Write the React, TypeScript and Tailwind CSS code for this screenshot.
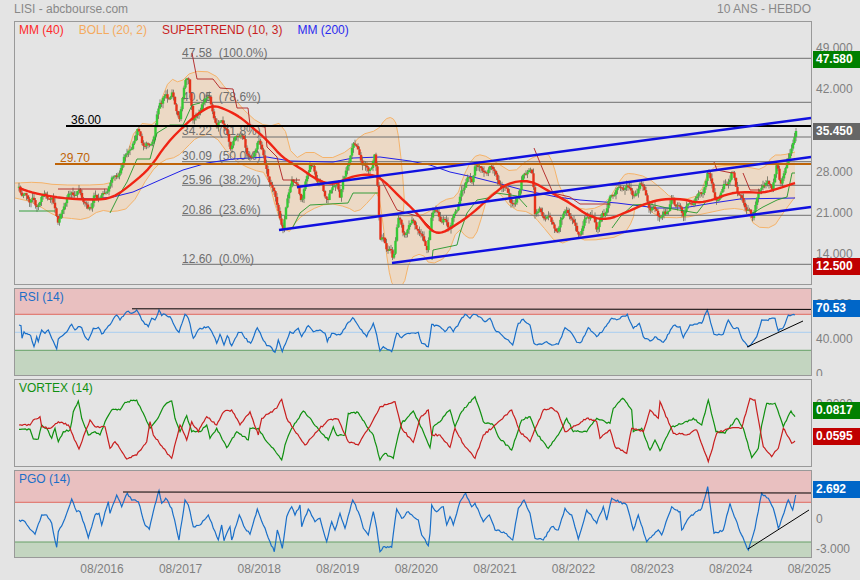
import React from "react";

type P = [number, number];

const parse = (s: string): P[] =>
  s.trim().split(";").filter(Boolean).map((p) => {
    const [a, b] = p.split(",").map(Number);
    return [a, b] as P;
  });
const fromZoom = (s: string, ox: number, oy: number): P[] =>
  parse(s).map(([a, b]) => [ox + a / 3, oy + b / 3] as P);
const pts = (a: P[]) => a.map(([x, y]) => `${x.toFixed(1)},${y.toFixed(1)}`).join(" ");
const rnd = (i: number) => {
  const v = Math.sin(i * 12.9898 + 4.1) * 43758.5453;
  return v - Math.floor(v);
};
const jitter = (a: P[], amp: number, seed: number): P[] => {
  const out: P[] = [];
  for (let i = 0; i < a.length - 1; i++) {
    const [x0, y0] = a[i];
    const [x1, y1] = a[i + 1];
    const n = Math.max(1, Math.round((x1 - x0) / 1.5));
    for (let k = 0; k < n; k++) {
      const t = k / n;
      const j = k === 0 ? 0 : (rnd(seed + i * 7 + k) - 0.5) * 2 * amp;
      out.push([x0 + (x1 - x0) * t, y0 + (y1 - y0) * t + j]);
    }
  }
  out.push(a[a.length - 1]);
  return out;
};
const chaikin = (a: P[], rounds = 2): P[] => {
  let cur = a;
  for (let r = 0; r < rounds; r++) {
    const out: P[] = [cur[0]];
    for (let i = 0; i < cur.length - 1; i++) {
      const [x0, y0] = cur[i];
      const [x1, y1] = cur[i + 1];
      out.push([x0 * 0.75 + x1 * 0.25, y0 * 0.75 + y1 * 0.25]);
      out.push([x0 * 0.25 + x1 * 0.75, y0 * 0.25 + y1 * 0.75]);
    }
    out.push(cur[cur.length - 1]);
    cur = out;
  }
  return cur;
};
const interp = (a: P[], x: number) => {
  for (let i = 0; i < a.length - 1; i++) {
    if (x <= a[i + 1][0]) {
      const t = (x - a[i][0]) / (a[i + 1][0] - a[i][0] || 1);
      return a[i][1] + (a[i + 1][1] - a[i][1]) * t;
    }
  }
  return a[a.length - 1][1];
};

const price = parse(
  "19,187;23,195;33,200;35,207;43,197;52,197;58,225;63,205;72,193;80,192;88,210;95,197;103,197;110,183;120,170;128,152;138,132;143,142;150,148;155,130;160,100;172,95;180,120;185,80;188,73;193,123;202,103;210,98;217,130;222,117;230,147;240,132;252,163;258,137;267,170;283,227;292,177;302,200;310,163;328,200;337,180;340,197;353,143;362,160;368,173;375,157;378,190;380,237;390,250;393,260;398,217;403,233;412,223;420,230;427,253;432,210;440,217;450,227;457,207;467,177;472,183;475,163;483,173;490,167;500,182;510,197;515,208;522,180;528,167;533,177;535,210;547,217;558,230;567,207;578,235;590,213;597,227;607,207;612,193;627,185;633,197;640,183;650,207;663,217;673,200;683,213;693,200;702,195;708,170;715,200;725,187;732,173;740,197;752,217;762,183;772,187;777,163;780,187;787,163;792,147;796,131"
);
const mm40 = chaikin(parse(
  "19,188;33,193;60,198;93,200;113,198;133,183;150,168;167,143;187,123;200,112;213,105;227,110;240,117;253,128;267,140;283,158;300,168;317,180;333,185;350,177;367,174;380,177;400,197;417,213;430,230;440,234;453,227;473,213;490,197;507,183;530,180;550,192;570,203;590,217;607,220;627,212;647,203;663,199;683,199;697,203;713,200;730,193;747,192;763,193;780,188;795,183"
));
const mm200 = parse(
  "19,188;33,193;60,198;93,199;113,197;133,192;160,180;183,170;207,163;233,159;267,157;290,161;333,162;353,158;380,157;410,161;430,165;450,172;473,177;497,183;523,190;557,197;580,200;617,203;657,208;683,208;713,203;740,199;795,198"
);
const bollUp = chaikin(parse(
  "15,183;37,182;57,185;100,185;113,182;123,167;137,123;157,125;160,103;170,78;180,83;192,71;213,72;227,90;250,117;267,127;283,122;293,160;310,150;327,160;350,150;360,135;378,130;385,119;392,117;397,125;402,167;405,210;398,216;420,216;432,210;443,200;457,197;463,177;473,157;482,154;497,163;513,173;527,160;547,152;553,163;560,190;573,207;590,210;607,203;623,175;630,173;647,177;663,190;670,197;683,200;700,195;710,167;730,165;747,167;763,170;773,155;783,155;795,152"
), 1);
const bollLow = chaikin(parse(
  "15,198;33,202;57,217;67,218;85,220;100,210;113,212;130,208;150,173;163,160;177,157;187,147;197,137;213,133;233,160;253,170;267,173;277,213;287,235;297,220;310,210;328,203;347,207;357,213;370,200;378,190;383,223;388,267;393,288;403,288;410,258;422,253;430,265;447,257;458,227;467,238;475,238;483,213;487,197;497,190;513,210;530,212;540,223;558,245;577,237;587,241;623,236;633,220;635,207;643,203;657,217;683,218;707,213;730,208;747,210;755,227;773,228;783,213;795,197"
), 1);
const greenTrend = [
  "19,211;55,211",
  "110,213;118,197;127,182;137,159;150,159;157,133;170,125;183,125;192,105;200,103",
  "293,227;300,213;310,205;348,203;353,193;378,193",
  "432,260;433,250;457,245;460,233;467,213;477,200;488,198;497,193;517,196;527,207",
  "612,228;620,217;633,205;650,204;667,208;697,213;707,200",
  "753,213;763,207;777,200;787,197;792,173;795,173",
].map(parse);
const redTrend = [
  "58,189;107,189",
  "192,53;197,79;213,79;220,88;233,89;237,108;248,108;250,125;265,127;267,147;277,157;283,180;300,180",
  "380,177;388,193;397,210;420,217;430,227",
  "534,148;543,170;553,193;570,197;580,204;610,204",
  "714,162;717,170;732,173",
  "743,173;750,190;760,190",
].map(parse);

const rsi = [
  ...fromZoom("57,120;63,122;66,160;72,140;85,148;92,152;102,185;110,155;115,170;125,135;135,145;145,135;155,160;170,192;175,162;195,145;215,118;225,135;235,125;245,128;255,155;265,165;280,130;295,127;305,147;320,130;335,112;350,90;360,105;380,80;395,85;410,75;425,105;445,125;455,100;465,105;477,75;485,92;495,88;510,95;525,125;537,142;555,88;565,100;580,160;600,130;625,125;640,150;650,175;660,148;672,180;682,152;695,182;715,142;725,142;735,160;752,175;772,128;785,155;800,182;815,188;825,202;835,165;847,200;870,140;880,145;895,130;905,155;925,122;940,140;960,135;975,145;982,170;995,145;1010,150;1025,145;1045,112;1058,98;1070,115;1085,135;1100,155;1120,115;1130,150;1140,198;1150,185;1175,200;1190,145;1205,158;1225,145;1255,142;1265,175;1285,185", 0, 285),
  ...fromZoom("0,155;5,118;30,125;45,140;60,125;70,140;105,88;120,100;130,88;145,95;165,110;180,100;195,135;220,155;235,165;248,180;265,115;280,103;300,120;312,175;335,178;350,170;370,180;385,178;405,128;425,145;440,172;455,170;475,128;500,155;520,135;545,100;565,103;592,88;610,130;628,115;640,155;660,168;675,155;700,172;730,122;750,125;760,158;780,120;815,115;832,75;852,148;880,147;895,105;910,130;925,130;935,160;955,185;980,155;995,105;1010,105;1035,100;1045,138;1060,128;1075,90;1085,90;1095,90", 430, 285),
];
const vxGreen = [
  ...fromZoom("57,433;90,433;100,462;115,462;125,420;140,430;155,460;165,430;175,470;190,440;210,435;220,380;235,348;245,400;265,450;285,440;300,450;315,410;335,375;360,375;375,352;410,345;430,385;450,430;470,405;495,360;515,348;525,400;540,440;560,392;575,440;600,440;620,420;630,460;650,430;680,488;710,440;745,465;750,430;775,430;800,470;820,490;845,525;855,480;875,430;910,378;925,395;950,425;985,465;1000,425;1010,450;1035,450;1045,385;1075,383;1105,430;1120,450;1140,525;1155,505;1180,520;1195,450;1205,415;1240,378;1270,440", 0, 285),
  ...fromZoom("0,488;10,425;30,410;40,395;60,375;75,425;95,380;135,335;160,410;190,420;205,455;245,495;275,405;300,395;320,445;355,490;385,450;410,400;430,440;470,440;500,400;540,415;550,370;578,340;605,375;610,440;635,430;660,495;675,465;690,497;725,425;760,415;790,400;815,420;835,345;858,440;885,445;920,400;940,430;965,518;985,490;995,420;1010,355;1035,355;1060,425;1083,378;1095,395", 430, 285),
];
const vxRed = [
  ...fromZoom("57,420;90,420;100,405;120,395;125,425;150,430;175,410;205,420;237,492;260,430;270,405;285,425;315,425;330,490;345,470;380,522;410,510;440,470;450,410;460,450;490,490;515,520;540,420;560,465;575,410;595,440;620,395;650,420;672,380;695,375;720,420;750,380;775,450;785,400;830,370;845,343;860,400;880,430;915,480;950,440;985,405;1015,403;1045,470;1075,480;1105,430;1140,365;1185,350;1205,430;1240,472;1260,400;1285,375", 0, 285),
  ...fromZoom("5,450;30,450;60,487;75,430;105,485;135,520;160,450;195,420;245,375;270,440;300,470;340,375;365,368;385,385;405,440;440,420;470,400;500,410;510,460;540,435;555,485;590,505;605,430;640,440;660,375;685,400;690,350;730,445;770,450;800,435;835,530;860,445;900,430;935,430;960,340;975,345;990,430;1000,485;1025,515;1045,490;1060,430;1085,475;1095,468", 430, 285),
];
const pgo = [
  ...fromZoom("57,705;75,710;85,725;105,748;125,690;140,690;155,715;170,787;175,740;195,700;215,642;230,680;240,680;265,758;285,690;297,685;305,720;325,650;330,685;350,630;365,665;382,625;395,645;415,650;435,720;448,733;460,680;477,617;485,655;497,640;515,670;537,765;555,645;565,660;580,725;600,720;625,690;640,730;655,765;665,720;672,767;690,725;695,765;718,690;735,730;750,748;772,672;790,720;810,770;823,800;832,735;847,790;860,695;875,665;885,690;900,660;905,725;925,672;945,710;960,700;980,770;995,710;1005,735;1020,685;1035,730;1058,645;1075,680;1090,730;1105,750;1120,680;1130,730;1140,800;1150,785;1175,787;1190,672;1205,700;1225,680;1240,695;1255,705;1265,750;1285,782", 0, 285),
  ...fromZoom("0,745;5,660;20,680;40,665;50,720;60,695;70,720;90,650;107,625;125,665;135,655;160,710;178,690;195,735;225,745;248,765;265,670;282,645;300,685;315,760;340,765;365,725;385,735;405,670;425,690;445,762;470,675;500,715;520,665;530,705;545,640;590,660;610,735;625,690;650,770;685,735;695,750;725,665;750,680;755,735;780,695;815,670;833,605;852,745;880,735;900,655;930,740;955,795;975,730;995,625;1015,640;1030,670;1045,730;1075,645;1088,675;1097,630", 430, 285),
];

const candles = (() => {
  const out: { x: number; o: number; c: number; hi: number; lo: number }[] = [];
  const noise = (i: number) => 3.2 * Math.sin(i * 0.95 + 2 * Math.sin(i * 0.13)) + (rnd(i) - 0.5) * 2.5;
  let prev = interp(price, 19);
  let i = 0;
  for (let x = 19; x <= 796; x += 1.5) {
    const c = interp(price, x) + (x > 780 ? 0 : noise(i));
    out.push({
      x,
      o: prev,
      c,
      hi: Math.min(prev, c) - rnd(i + 500) * 5,
      lo: Math.max(prev, c) + rnd(i + 900) * 5,
    });
    prev = c;
    i++;
  }
  return out;
})();

const fibs: [number, string][] = [
  [58.3, "47.58  (100.0%)"],
  [102.3, "40.05  (78.6%)"],
  [137, "34.22  (61.8%)"],
  [161.7, "30.09  (50.0%)"],
  [185.3, "25.96  (38.2%)"],
  [215.3, "20.86  (23.6%)"],
  [264.3, "12.60  (0.0%)"],
];

function Tick({ children }: { children?: React.ReactNode }) {
  return <div className="h-[14px] leading-[14px] text-[#808080] pl-[4px]">{children}</div>;
}
function Tag({ className, children }: { className: string; children: React.ReactNode }) {
  return (
    <div className={`absolute left-[1px] w-[47px] h-[17px] pl-[3px] leading-[17px] font-bold text-white ${className}`}>
      {children}
    </div>
  );
}

function MainChart() {
  const area = [...bollUp, ...[...bollLow].reverse()];
  return (
    <svg viewBox="15 22 796 262" className="w-[796px] h-[262px] block text-[12px]">
      <polygon points={pts(area)} fill="#ecd9c5" />
      <polyline points={pts(bollUp)} fill="none" stroke="#f5b36a" strokeWidth="1" />
      <polyline points={pts(bollLow)} fill="none" stroke="#f5b36a" strokeWidth="1" />
      {fibs.map(([y, t]) => (
        <g key={t}>
          <line x1="182" x2="811" y1={y} y2={y} stroke="#6e6e6e" strokeWidth="1" />
          <text x="182" y={y - 1.8} fill="#6e6e6e" style={{ whiteSpace: "pre" }}>
            {t}
          </text>
        </g>
      ))}
      <polyline points={pts(mm200)} fill="none" stroke="#2020e8" strokeWidth="1" />
      {candles.map((k) => (
        <g key={k.x}>
          <line x1={k.x} x2={k.x} y1={k.hi} y2={k.lo} stroke="#6a6a5a" strokeWidth="0.8" />
          <rect
            x={k.x - 1.2}
            y={Math.min(k.o, k.c)}
            width="2.4"
            height={Math.max(1, Math.abs(k.o - k.c))}
            fill={k.c < k.o ? "#36c936" : "#e5321a"}
          />
        </g>
      ))}
      {greenTrend.map((g, i) => (
        <polyline key={i} points={pts(g)} fill="none" stroke="#23962a" strokeWidth="0.9" />
      ))}
      {redTrend.map((g, i) => (
        <polyline key={i} points={pts(g)} fill="none" stroke="#b02020" strokeWidth="0.9" />
      ))}
      <polyline points={pts(mm40)} fill="none" stroke="#f02414" strokeWidth="2.4" strokeLinejoin="round" />
      <line x1="55" x2="811" y1="164" y2="164" stroke="#bf6408" strokeWidth="2" />
      <text x="60" y="162" fill="#bf6408">29.70</text>
      <line x1="66" x2="811" y1="126" y2="126" stroke="#000" strokeWidth="2" />
      <text x="71" y="124" fill="#000">36.00</text>
      <line x1="297" x2="811" y1="187" y2="118" stroke="#1010e0" strokeWidth="2.4" />
      <line x1="279" x2="811" y1="230" y2="157" stroke="#1010e0" strokeWidth="2.4" />
      <line x1="392" x2="811" y1="263" y2="207" stroke="#1010e0" strokeWidth="2.4" />
    </svg>
  );
}

function Rsi() {
  return (
    <svg viewBox="15 289 796 86" className="w-[796px] h-[86px] block">
      <rect x="15" y="289" width="796" height="25.3" fill="#e9c0c0" />
      <rect x="15" y="350.3" width="796" height="25" fill="#c3d5c0" />
      <line x1="15" x2="811" y1="314.3" y2="314.3" stroke="#e06a60" />
      <line x1="15" x2="811" y1="332.3" y2="332.3" stroke="#a8cdf0" />
      <line x1="15" x2="811" y1="350.3" y2="350.3" stroke="#66a066" />
      <polyline points={pts(jitter(rsi, 1.1, 3))} fill="none" stroke="#1a6fc8" strokeWidth="1.2" />
      <line x1="132" x2="811" y1="308.8" y2="309.4" stroke="#000" />
      <line x1="747" x2="803" y1="347" y2="321" stroke="#000" />
    </svg>
  );
}

function Vortex() {
  return (
    <svg viewBox="15 380 796 86" className="w-[796px] h-[86px] block">
      <polyline points={pts(jitter(vxGreen, 1, 11))} fill="none" stroke="#109010" strokeWidth="1.2" />
      <polyline points={pts(jitter(vxRed, 1, 29))} fill="none" stroke="#c81e1e" strokeWidth="1.2" />
    </svg>
  );
}

function Pgo() {
  return (
    <svg viewBox="15 471 796 86" className="w-[796px] h-[86px] block">
      <rect x="15" y="471" width="796" height="31.3" fill="#e9c0c0" />
      <rect x="15" y="542" width="796" height="16" fill="#c3d5c0" />
      <line x1="15" x2="811" y1="502.3" y2="502.3" stroke="#e06a60" />
      <line x1="15" x2="811" y1="542" y2="542" stroke="#66a066" />
      <polyline points={pts(jitter(pgo, 1.1, 51))} fill="none" stroke="#1a6fc8" strokeWidth="1.2" />
      <line x1="123" x2="811" y1="492" y2="493" stroke="#000" />
      <line x1="748" x2="809" y1="549" y2="510" stroke="#000" />
    </svg>
  );
}

const panel = "relative w-[798px] border border-[#999999] overflow-hidden";
const gutter = "relative w-[48px] overflow-hidden flex flex-col";

export default function App() {
  return (
    <div className="w-[860px] h-[580px] overflow-hidden bg-[#e4e4e4] font-['Liberation_Sans',Arial,sans-serif] text-[12px]">
      <div className="h-[21px] ml-[14px] w-[797px] flex justify-between items-center text-[#888888] pb-[3px]">
        <span>LISI - abcbourse.com</span>
        <span>10 ANS - HEBDO</span>
      </div>

      <div className="flex flex-col gap-[3px] ml-[14px]">
        <div className="flex h-[264px]">
          <div className={panel}>
            <MainChart />
            <div className="absolute left-[4px] top-[1px] flex gap-[15px] leading-[15px]">
              <span className="text-[#ff2a2a]">MM (40)</span>
              <span className="text-[#f5ab5e]">BOLL (20, 2)</span>
              <span className="text-[#c81e1e]">SUPERTREND (10, 3)</span>
              <span className="text-[#2a2af0]">MM (200)</span>
            </div>
          </div>
          <div className={`${gutter} pt-[20px] gap-[27.2px]`}>
            <Tick>49.000</Tick>
            <Tick>42.000</Tick>
            <Tick />
            <Tick>28.000</Tick>
            <Tick>21.000</Tick>
            <Tick>14.000</Tick>
            <Tag className="top-[30px] bg-[#008000]">47.580</Tag>
            <Tag className="top-[102px] bg-[#666666]">35.450</Tag>
            <Tag className="top-[237px] bg-[#c00000]">12.500</Tag>
          </div>
        </div>

        <div className="flex h-[88px]">
          <div className={panel}>
            <Rsi />
            <span className="absolute left-[4px] top-[1px] leading-[15px] text-[#1a6fc8]">RSI (14)</span>
          </div>
          <div className={`${gutter} pt-[9px] gap-[21px]`}>
            <Tick>80.000</Tick>
            <Tick>40.000</Tick>
            <Tick>0</Tick>
            <Tag className="top-[12px] bg-[#0066c8]">70.53</Tag>
          </div>
        </div>

        <div className="flex h-[88px]">
          <div className={panel}>
            <Vortex />
            <span className="absolute left-[4px] top-[1px] leading-[15px] text-[#109010]">VORTEX (14)</span>
          </div>
          <div className={`${gutter} pt-[18px]`}>
            <Tick>0.2000</Tick>
            <Tag className="top-[23px] bg-[#008000]">0.0817</Tag>
            <Tag className="top-[49px] bg-[#c00000]">0.0595</Tag>
          </div>
        </div>

        <div className="flex h-[88px]">
          <div className={panel}>
            <Pgo />
            <span className="absolute left-[4px] top-[1px] leading-[15px] text-[#1a6fc8]">PGO (14)</span>
          </div>
          <div className={`${gutter} pt-[42px] gap-[16px]`}>
            <Tick>0</Tick>
            <Tick>-3.000</Tick>
            <Tag className="top-[11px] bg-[#0066c8]">2.692</Tag>
          </div>
        </div>
      </div>

      <div className="flex ml-[62.7px] h-[22px] items-center text-[#808080]">
        {["08/2016", "08/2017", "08/2018", "08/2019", "08/2020", "08/2021", "08/2022", "08/2023", "08/2024", "08/2025"].map((d) => (
          <span key={d} className="w-[78.6px] shrink-0 text-center">{d}</span>
        ))}
      </div>
    </div>
  );
}
